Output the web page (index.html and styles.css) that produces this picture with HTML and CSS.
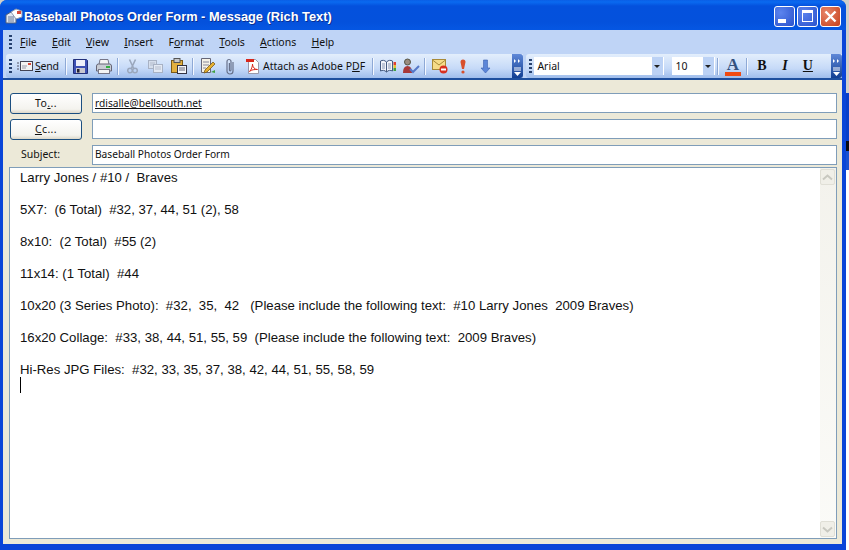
FILE: index.html
```html
<!DOCTYPE html>
<html lang="en">
<head>
  <meta charset="UTF-8" />
  <title>Baseball Photos Order Form - Message (Rich Text)</title>
  <link rel="stylesheet" href="styles.css">
</head>
<body>
  <div class="window">
    <div class="titlebar">
      <svg class="title-icon" width="18" height="16" viewBox="0 0 18 16">
        <path d="M1 7l5-3 5 2v9H1z" fill="#dfe6f2" stroke="#50607e"/>
        <path d="M6 4l5-3 6 2v6l-6 2z" fill="#fff" stroke="#8a97b0"/>
        <path d="M12 3h4v3h-4z" fill="#d8483a"/>
        <path d="M3 9h6M3 11h6M3 13h6" stroke="#6b7a96"/>
      </svg>
      <div class="title-text">Baseball Photos Order Form - Message (Rich Text)</div>
      <div class="win-buttons">
        <div class="win-btn"><span class="glyph-min"></span></div>
        <div class="win-btn"><span class="glyph-max"></span></div>
        <div class="win-btn win-close">
          <svg width="13" height="13" viewBox="0 0 13 13"><path d="M1.500 1.500l10 10M11.500 1.500l-10 10" stroke="#fff" stroke-width="2.400"/></svg>
        </div>
      </div>
    </div>

    <div class="menubar">
      <div class="grip"></div>
      <span class="menu-item"><u>F</u>ile</span>
      <span class="menu-item"><u>E</u>dit</span>
      <span class="menu-item"><u>V</u>iew</span>
      <span class="menu-item"><u>I</u>nsert</span>
      <span class="menu-item">F<u>o</u>rmat</span>
      <span class="menu-item"><u>T</u>ools</span>
      <span class="menu-item"><u>A</u>ctions</span>
      <span class="menu-item"><u>H</u>elp</span>
    </div>

    <div class="toolbars">
      <div class="toolbar toolbar-main">
        <div class="grip"></div>
        <div class="tool-send">
          <svg width="16" height="12" viewBox="0 0 16 12"><path d="M0 3h2M0 6h2M0 9h2" stroke="#556"/><rect x="3.500" y="1.500" width="12" height="9" fill="#f2f2f2" stroke="#445"/><rect x="11" y="3" width="3" height="2" fill="#d8483a"/><path d="M5 6h5M5 8h4" stroke="#99a"/></svg>
          <span class="tool-label"><u>S</u>end</span>
        </div>
        <div class="sep"></div>
        <div class="tool"><svg width="15" height="15" viewBox="0 0 15 15"><path d="M.5.500h13l1 1v13H.5z" fill="#3d51b4" stroke="#22307a"/><rect x="3" y="1" width="9" height="6" fill="#eef0fa"/><rect x="3" y="9" width="9" height="5" fill="#c8c8d0"/><rect x="4" y="10" width="2.500" height="3.500" fill="#223"/></svg></div>
        <div class="tool"><svg width="16" height="15" viewBox="0 0 16 15"><path d="M4 .5h8l1 5H3z" fill="#f4f4f4" stroke="#778"/><path d="M.5 7q0-2 2-2h11q2 0 2 2v5H.5z" fill="#c8ccd4" stroke="#667"/><rect x="2.500" y="10.500" width="11" height="4" fill="#f4f4f4" stroke="#778"/><rect x="10" y="7" width="4" height="2" fill="#32b040"/></svg></div>
        <div class="sep"></div>
        <div class="tool"><svg width="11" height="15" viewBox="0 0 11 15"><path d="M2.500.500l4 8.500M8.500.500l-4 8.500" stroke="#9aa7bc" stroke-width="1.600"/><circle cx="3" cy="11.500" r="2.300" fill="none" stroke="#9aa7bc" stroke-width="1.500"/><circle cx="8" cy="11.500" r="2.300" fill="none" stroke="#9aa7bc" stroke-width="1.500"/></svg></div>
        <div class="tool"><svg width="15" height="13" viewBox="0 0 15 13"><rect x=".5" y=".5" width="8" height="8" fill="#d5deec" stroke="#a8b2c4"/><path d="M2 3h5M2 5h5" stroke="#b4bccc"/><rect x="5.500" y="4.500" width="9" height="8" fill="#e4eaf4" stroke="#a8b2c4"/><path d="M7 7h6M7 9h6" stroke="#b4bccc"/></svg></div>
        <div class="tool"><svg width="16" height="16" viewBox="0 0 16 16"><rect x=".5" y="2.500" width="11" height="12" fill="#e2b040" stroke="#7a5a18"/><rect x="3" y=".5" width="6" height="4" fill="#c8c8c8" stroke="#555"/><rect x="6.500" y="7.500" width="9" height="8" fill="#f4f6fa" stroke="#334"/><path d="M8 10h6M8 12h6" stroke="#667"/></svg></div>
        <div class="sep"></div>
        <div class="tool"><svg width="16" height="16" viewBox="0 0 16 16"><path d="M1.500.5h9v14h-9z" fill="#f6f2e6" stroke="#667"/><path d="M3 4h6M3 7h6M3 10h3" stroke="#889"/><path d="M5 12l8-8 2 2-8 8-3 1z" fill="#e6b030" stroke="#7a5a18" stroke-width=".8"/><path d="M11 14l4-2v3z" fill="#40a040"/></svg></div>
        <div class="tool"><svg width="9" height="17" viewBox="0 0 9 17"><path d="M7 4v9a3 3 0 0 1-6 0V3.500a2 2 0 0 1 4 0V12a.8.8 0 0 1-1.600 0V5" fill="none" stroke="#67718a" stroke-width="1.200"/></svg></div>
        <div class="tool-pdf">
          <svg width="14" height="16" viewBox="0 0 14 16"><path d="M2.500 1.500h7l3 3v11h-10z" fill="#fff" stroke="#99a"/><path d="M0 1h8v3H0z" fill="#d8281c"/><path d="M3.500 13.500c2-2 3-5 3-7.500 0 3 2 5.500 5 5.500-3 0-6 0-8 2z" fill="none" stroke="#d8281c"/></svg>
          <span class="tool-label">Attach as Adobe P<u>D</u>F</span>
        </div>
        <div class="sep"></div>
        <div class="tool"><svg width="16" height="14" viewBox="0 0 16 14"><path d="M.5 2c2-1 4-1 6 1v10c-2-2-4-2-6-1z" fill="#f2f4fa" stroke="#445a80"/><path d="M6.500 3c2-2 4-2 6-1v10c-2-1-4-1-6 1z" fill="#f2f4fa" stroke="#445a80"/><path d="M2 5h3M2 7h3M2 9h3M8 5h3M8 7h3M8 9h3" stroke="#8a98b4"/><path d="M13.500 3H16v3h-2.500z" fill="#e04030"/><path d="M13.500 6H16v3h-2.500z" fill="#e8c030"/><path d="M13.500 9H16v3h-2.500z" fill="#40a040"/></svg></div>
        <div class="tool"><svg width="18" height="16" viewBox="0 0 18 16"><circle cx="5.500" cy="4" r="3" fill="#9a8c80" stroke="#554"/><path d="M1 15q0-7 4.500-7T10 15z" fill="#a83838"/><path d="M8 11l3 3 6-6" fill="none" stroke="#5578c8" stroke-width="2"/></svg></div>
        <div class="sep"></div>
        <div class="tool"><svg width="16" height="16" viewBox="0 0 16 16"><rect x=".5" y="1.500" width="13" height="10" fill="#f6dc88" stroke="#a88a38"/><path d="M.5 2l6.500 5 6.500-5" fill="none" stroke="#a88a38"/><circle cx="11.500" cy="11.500" r="4" fill="#d83020"/><rect x="9" y="10.500" width="5" height="2" fill="#fff"/></svg></div>
        <div class="tool"><svg width="6" height="15" viewBox="0 0 6 15"><path d="M.5 3a2.500 2.500 0 0 1 5 0L4 10H2z" fill="#d8502c"/><circle cx="3" cy="13" r="1.600" fill="#d8502c"/></svg></div>
        <div class="tool"><svg width="11" height="15" viewBox="0 0 11 15"><path d="M3.500 1h4v8H10l-4.500 5L1 9h2.500z" fill="#5c86d8" stroke="#3a60b0" stroke-width=".6"/></svg></div>
        <div class="overflow">
          <svg width="11" height="24" viewBox="0 0 11 24"><path d="M2 5l2 2-2 2zM6 5l2 2-2 2z" fill="#fff"/><path d="M2 14h7M2 16h7" stroke="#fff"/><path d="M2 18h7l-3.500 4z" fill="#fff"/></svg>
        </div>
      </div>

      <div class="toolbar toolbar-format">
        <div class="grip"></div>
        <div class="combo combo-font"><span>Arial</span><span class="combo-arrow"></span></div>
        <div class="combo combo-size"><span>10</span><span class="combo-arrow"></span></div>
        <div class="sep"></div>
        <div class="tool"><div class="font-color">A</div></div>
        <div class="sep"></div>
        <div class="tool fmt">B</div>
        <div class="tool fmt fmt-i">I</div>
        <div class="tool fmt fmt-u">U</div>
        <div class="overflow">
          <svg width="11" height="24" viewBox="0 0 11 24"><path d="M2 5l2 2-2 2zM6 5l2 2-2 2z" fill="#fff"/><path d="M2 14h7M2 16h7" stroke="#fff"/><path d="M2 18h7l-3.500 4z" fill="#fff"/></svg>
        </div>
      </div>
    </div>

    <div class="content">
      <div class="field-row">
        <div class="addr-btn">To<u>.</u>..</div>
        <div class="field"><u>rdisalle@bellsouth.net</u></div>
      </div>
      <div class="field-row">
        <div class="addr-btn"><u>C</u>c...</div>
        <div class="field"></div>
      </div>
      <div class="field-row">
        <div class="subject-label">Subject:</div>
        <div class="field">Baseball Photos Order Form</div>
      </div>

      <div class="editor">
        <div class="body-text">
          <p>Larry Jones / #10 /&nbsp; Braves</p>
          <p>&nbsp;</p>
          <p>5X7:&nbsp; (6 Total)&nbsp; #32, 37, 44, 51 (2), 58</p>
          <p>&nbsp;</p>
          <p>8x10:&nbsp; (2 Total)&nbsp; #55 (2)</p>
          <p>&nbsp;</p>
          <p>11x14: (1 Total)&nbsp; #44</p>
          <p>&nbsp;</p>
          <p>10x20 (3 Series Photo):&nbsp; #32,&nbsp; 35,&nbsp; 42&nbsp;&nbsp; (Please include the following text:&nbsp; #10 Larry Jones&nbsp; 2009 Braves)</p>
          <p>&nbsp;</p>
          <p>16x20 Collage:&nbsp; #33, 38, 44, 51, 55, 59&nbsp; (Please include the following text:&nbsp; 2009 Braves)</p>
          <p>&nbsp;</p>
          <p>Hi-Res JPG Files:&nbsp; #32, 33, 35, 37, 38, 42, 44, 51, 55, 58, 59</p>
          <div class="caret"></div>
        </div>
        <div class="scrollbar">
          <div class="scroll-btn"><svg width="11" height="7" viewBox="0 0 11 7"><path d="M1 5.500l4.500-4 4.500 4" fill="none" stroke="#c8c8c0" stroke-width="2"/></svg></div>
          <div class="scroll-btn"><svg width="11" height="7" viewBox="0 0 11 7"><path d="M1 1.500l4.500 4 4.500-4" fill="none" stroke="#c8c8c0" stroke-width="2"/></svg></div>
        </div>
      </div>
    </div>
  </div>
</body>
</html>
```

FILE: styles.css
```css
body {
  margin: 0;
  width: 849px;
  height: 550px;
  overflow: hidden;
  background: linear-gradient(#cfcfca 0, #cfcfca 93px, #0a3fc8 93px, #0a3fc8 141px, #0a0a10 141px, #0a0a10 151px, #1a50d0 151px, #1a50d0 170px, #fff 170px);
  font-family: "Noto Sans", Tahoma, sans-serif;
}
.window {
  width: 846px;
  height: 550px;
  box-sizing: border-box;
  display: flex;
  flex-direction: column;
  background: #0a45d8;
  border-radius: 7px 7px 0 0;
  overflow: hidden;
  padding: 0 4px 6px 3px;
}
.titlebar {
  height: 30px;
  margin: 0 -4px 0 -3px;
  padding: 2px 5px 0 5px;
  box-sizing: border-box;
  display: flex;
  align-items: center;
  background: linear-gradient(#0b5fe6 0, #0a6af0 2px, #0451dd 6px, #0451dc 22px, #0556e2 29px);
  flex: none;
}
.title-icon {
  margin-right: 1px;
}
.title-text {
  flex: 1;
  color: #fff;
  font-family: "Liberation Sans", Arial, sans-serif;
  font-size: 12.800px;
  font-weight: bold;
  text-shadow: 1px 1px 0 #0a2f90;
}
.win-buttons {
  display: flex;
  gap: 2px;
}
.win-btn {
  width: 19px;
  height: 19px;
  border: 1px solid #fff;
  border-radius: 3px;
  background: radial-gradient(circle at 30% 30%, #5c84ee, #2a52cc);
  display: flex;
  align-items: center;
  justify-content: center;
}
.win-close {
  background: radial-gradient(circle at 30% 30%, #e8866a, #c6401c);
}
.glyph-min {
  width: 8px;
  height: 4px;
  background: #fff;
  margin: 9px 6px 0 0;
}
.glyph-max {
  width: 9px;
  height: 8px;
  border: 1px solid #fff;
  border-top-width: 3px;
}
.grip {
  width: 3px;
  height: 14px;
  margin-right: 3px;
  flex: none;
  background: repeating-linear-gradient(#27416f 0, #27416f 2px, transparent 2px, transparent 4px);
}
.menubar {
  height: 24px;
  flex: none;
  display: flex;
  align-items: center;
  gap: 15.200px;
  background: #bfd4f6;
  font-size: 10.500px;
  color: #111;
  padding-left: 6px;
}
.menubar .grip {
  margin-right: -7.200px;
}
.toolbars {
  height: 26px;
  flex: none;
  display: flex;
  gap: 3px;
  background: linear-gradient(#bfd4f6 24px, #1e4f9e 24px);
}
.toolbar {
  display: flex;
  align-items: center;
  height: 24px;
  border-radius: 3px 0 0 3px;
  background: linear-gradient(#e3eefc, #c6daf8 60%, #9fbdec);
  font-size: 10.500px;
  color: #111;
  padding-left: 3px;
  box-sizing: border-box;
  position: relative;
}
.toolbar-main {
  width: 518px;
  margin-left: 3px;
}
.toolbar-format {
  width: 316px;
}
.toolbar-format .grip {
  margin-right: 2px;
}
.tool {
  width: 23px;
  height: 22px;
  flex: none;
  display: flex;
  align-items: center;
  justify-content: center;
}
.tool-send {
  width: 48px;
  padding-left: 2px;
  box-sizing: border-box;
  display: flex;
  align-items: center;
  flex: none;
}
.tool-send .tool-label {
  margin-left: 2px;
  letter-spacing: -.2px;
}
.tool-pdf {
  width: 128px;
  padding-left: 4px;
  box-sizing: border-box;
  display: flex;
  align-items: center;
  flex: none;
}
.tool-label {
  margin-left: 3px;
  white-space: nowrap;
}
.sep {
  width: 6px;
  height: 17px;
  flex: none;
  background: linear-gradient(90deg, transparent 2px, #8ea9d6 2px, #8ea9d6 3px, #f4f8ff 3px, #f4f8ff 4px, transparent 4px);
}
.overflow {
  position: absolute;
  right: 0;
  top: 0;
  width: 11px;
  height: 24px;
  background: linear-gradient(#5f88d8, #123f92);
  border-radius: 0 3px 3px 0;
}
.combo {
  height: 18px;
  box-sizing: border-box;
  background: #fff;
  display: flex;
  align-items: center;
  justify-content: space-between;
  padding-left: 3px;
  flex: none;
}
.combo-font {
  width: 130px;
  margin-right: 8px;
}
.combo-size {
  width: 43px;
}
.combo-arrow {
  width: 12px;
  height: 18px;
  background: #bcd2f5;
  border-right: 1px solid #fff;
  box-sizing: border-box;
  position: relative;
}
.combo-arrow::after {
  content: "";
  position: absolute;
  left: 2px;
  top: 8px;
  border-left: 3px solid transparent;
  border-right: 3px solid transparent;
  border-top: 3px solid #222;
}
.font-color {
  width: 16px;
  height: 19px;
  font-family: "Liberation Serif", serif;
  font-weight: bold;
  font-size: 17px;
  line-height: 15px;
  text-align: center;
  color: #33507f;
  border-bottom: 4px solid #f04a12;
  box-sizing: border-box;
}
.fmt {
  font-family: "Liberation Serif", serif;
  font-weight: bold;
  font-size: 14px;
}
.fmt-i {
  font-style: italic;
}
.fmt-u {
  text-decoration: underline;
}
.content {
  flex: 1;
  background: #ece9d8;
  padding: 13px 5px 5px 6px;
  display: flex;
  flex-direction: column;
  min-height: 0;
}
.field-row {
  display: flex;
  gap: 10px;
  height: 20px;
  margin-bottom: 6px;
  font-size: 10.200px;
  color: #111;
}
.addr-btn {
  width: 72px;
  height: 21px;
  box-sizing: border-box;
  border: 1px solid #1c4f80;
  border-radius: 3px;
  background: linear-gradient(#fff, #f4f3ee 80%, #dcd8ca);
  text-align: center;
  line-height: 19px;
  margin-left: 1px;
  font-size: 10.500px;
  letter-spacing: .4px;
}
.subject-label {
  width: 72px;
  padding-left: 11px;
  box-sizing: border-box;
  margin-left: 1px;
  line-height: 18px;
  font-size: 10.500px;
}
.field {
  flex: 1;
  height: 20px;
  box-sizing: border-box;
  border: 1px solid #7f9db9;
  background: #fff;
  padding-left: 2px;
  line-height: 18px;
}
.field-row:nth-child(3) .field {
  line-height: 17px;
}
.editor {
  flex: 1;
  display: flex;
  min-height: 0;
  margin-top: -4px;
  border: 1px solid #7f9db9;
  background: #fff;
}
.body-text {
  flex: 1;
  padding: 1px 0 0 10px;
  font-family: "Liberation Sans", Arial, sans-serif;
  font-size: 13.200px;
  color: #111;
}
.body-text p {
  margin: 0;
  height: 16px;
  line-height: 18px;
  white-space: nowrap;
}
.caret {
  width: 1px;
  height: 16px;
  background: #000;
}
.scrollbar {
  width: 16px;
  padding: 1px 1px 1px 0;
  box-sizing: border-box;
  flex: none;
  display: flex;
  flex-direction: column;
  justify-content: space-between;
  background: linear-gradient(#f3f2ec, #fbfbf8);
}
.scroll-btn {
  height: 16px;
  background: #f0efe8;
  border: 1px solid #e0dfd6;
  border-radius: 2px;
  box-sizing: border-box;
  display: flex;
  align-items: center;
  justify-content: center;
}
```
